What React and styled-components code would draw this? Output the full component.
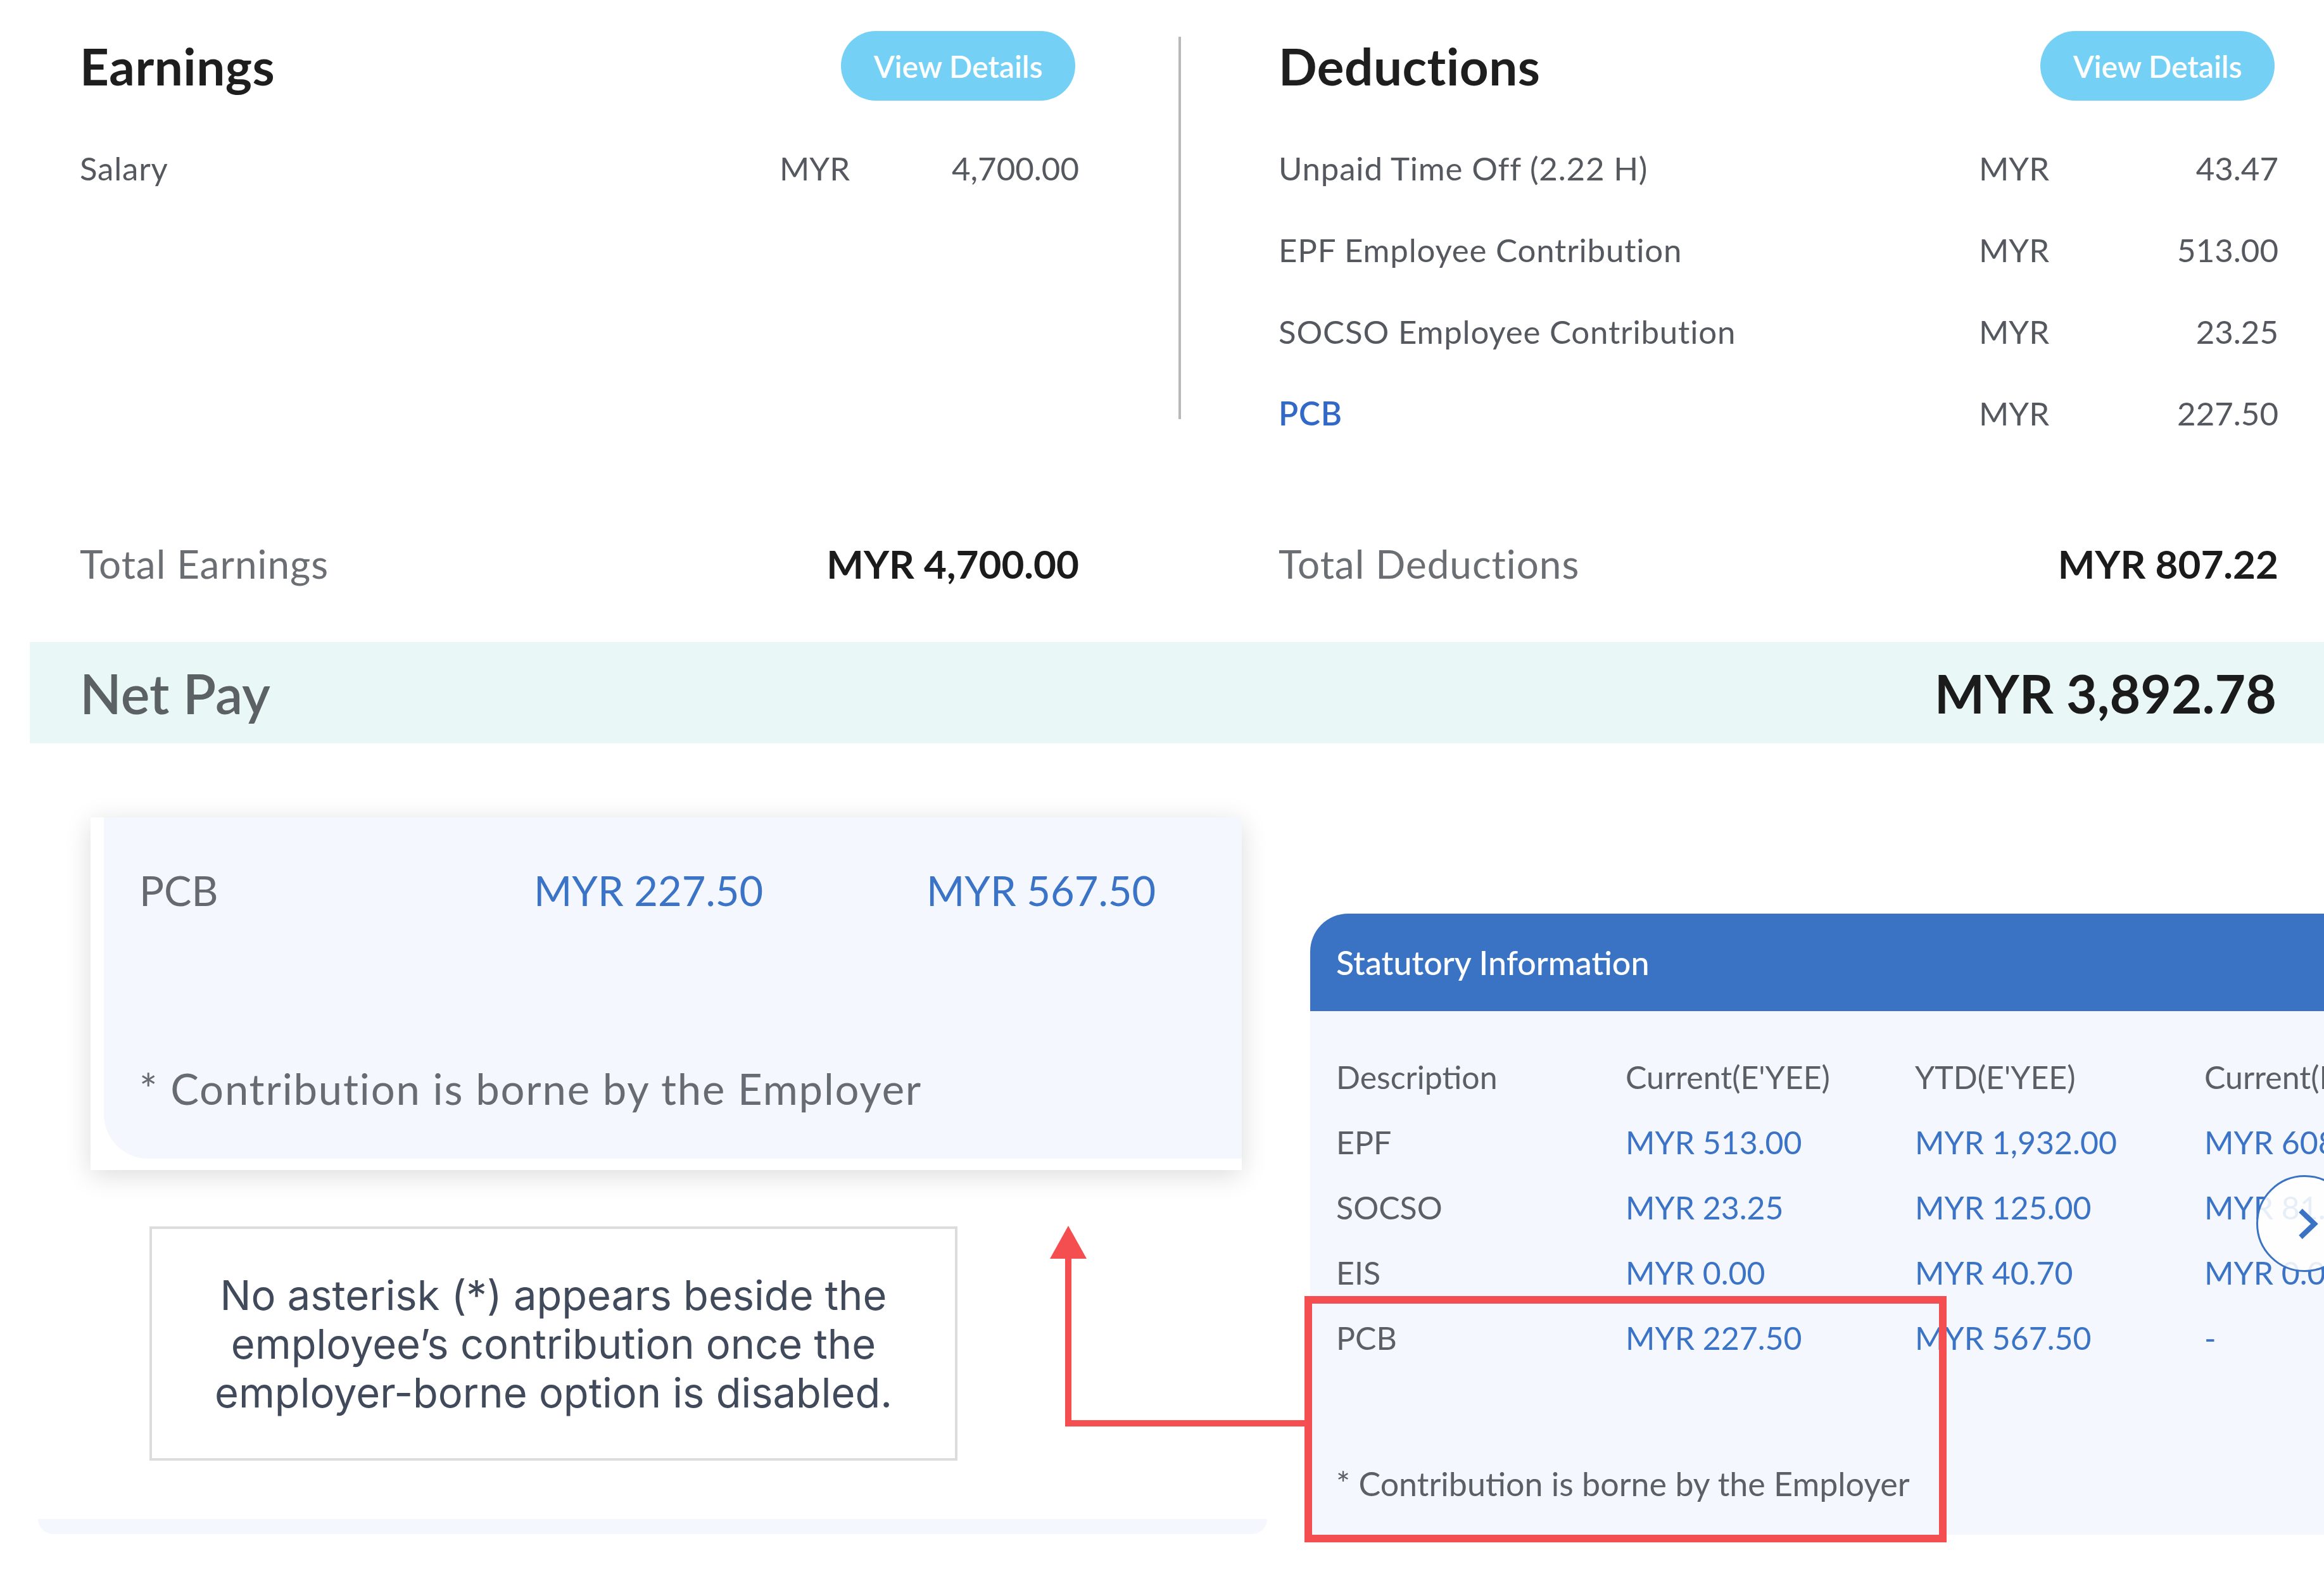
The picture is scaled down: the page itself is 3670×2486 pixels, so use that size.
import React from "react";
import styled, { createGlobalStyle } from "styled-components";

const GlobalStyle = createGlobalStyle`
  body {
    margin: 0;
    background: #ffffff;
    font-family: Lato, "Noto Sans", sans-serif;
  }
`;

const Page = styled.div`
  position: relative;
  width: 3670px;
  height: 2486px;
  overflow: hidden;
  background: #ffffff;
`;

const Summary = styled.div`
  display: flex;
  padding: 0 72px 0 126px;
`;

const Column = styled.div`
  display: flex;
  flex-direction: column;
  width: ${(p) => (p.$width ? `${p.$width}px` : "auto")};
  flex: ${(p) => (p.$width ? "0 0 auto" : "1")};
`;

const Header = styled.div`
  display: flex;
  align-items: center;
  justify-content: space-between;
  height: 110px;
  margin-top: 49px;
`;

const Title = styled.h2`
  margin: 0;
  font-size: 80px;
  font-weight: 700;
  letter-spacing: 0.5px;
  color: #1e1e1e;
`;

const DetailsButton = styled.button`
  width: 370px;
  height: 110px;
  margin-right: 6px;
  border: none;
  border-radius: 55px;
  background: #74d0f4;
  color: #ffffff;
  font-family: inherit;
  font-size: 48px;
  font-weight: 600;
`;

const ItemList = styled.div`
  display: flex;
  flex-direction: column;
  height: 516px;
  margin-top: 42px;
`;

const ItemRow = styled.div`
  display: grid;
  grid-template-columns: 1fr 473px;
  align-items: center;
  height: 129px;
  font-size: 51px;
  color: #55595f;
`;

const ItemLabel = styled.span`
  letter-spacing: 0.8px;
  color: ${(p) => (p.$link ? "#3369c6" : "#55595f")};
  font-weight: ${(p) => (p.$link ? 600 : 400)};
`;

const Amount = styled.div`
  display: flex;
  justify-content: space-between;
`;

const TotalRow = styled.div`
  display: flex;
  align-items: center;
  justify-content: space-between;
  height: 100px;
  margin-top: 123px;
`;

const TotalLabel = styled.span`
  font-size: 62px;
  letter-spacing: 1px;
  color: #6b6f74;
`;

const TotalValue = styled.span`
  font-size: 62px;
  font-weight: 700;
  color: #1b1b1b;
`;

const Divider = styled.div`
  flex: 0 0 4px;
  height: 604px;
  margin: 58px 154px 0 157px;
  background: #b8b8b8;
`;

const NetPayBar = styled.div`
  display: flex;
  align-items: center;
  justify-content: space-between;
  height: 160px;
  margin: 74px 0 0 47px;
  padding: 0 75px 0 79px;
  background: #e9f7f6;
`;

const NetLabel = styled.span`
  font-size: 86px;
  font-weight: 600;
  color: #5c6166;
`;

const NetValue = styled.span`
  font-size: 84px;
  font-weight: 700;
  color: #1b1b1b;
`;

const Lower = styled.div`
  display: flex;
  align-items: flex-start;
`;

const LeftCol = styled.div`
  display: flex;
  flex-direction: column;
  flex: 0 0 1941px;
  margin-left: 60px;
`;

const SnippetCard = styled.div`
  box-sizing: border-box;
  width: 1818px;
  margin: 117px 0 0 83px;
  padding: 0 0 18px 21px;
  background: #ffffff;
  box-shadow: 0 8px 40px rgba(0, 0, 0, 0.14);
`;

const SnippetInner = styled.div`
  display: flex;
  flex-direction: column;
  height: 539px;
  padding-left: 56px;
  background: #f4f7fd;
  border-bottom-left-radius: 70px;
`;

const SnippetRow = styled.div`
  display: grid;
  grid-template-columns: 623px 620px auto;
  align-items: center;
  height: 80px;
  margin-top: 75px;
  font-size: 65px;
`;

const Muted = styled.span`
  color: ${(p) => p.$color || "#666a70"};
`;

const Blue = styled.span`
  color: #3b73c6;
`;

const SnippetNote = styled.div`
  height: 80px;
  line-height: 80px;
  margin-top: 233px;
  font-size: 67px;
  letter-spacing: 1.8px;
  color: #676b72;
`;

const Annotation = styled.div`
  box-sizing: border-box;
  display: flex;
  align-items: center;
  justify-content: center;
  width: 1276px;
  height: 370px;
  margin: 89px 0 0 176px;
  border: 4px solid #dcdcdc;
  font-family: Inter, "Liberation Sans", sans-serif;
  font-size: 65px;
  line-height: 77px;
  text-align: center;
  color: #404a5a;
`;

const BottomStrip = styled.div`
  height: 24px;
  margin-top: 92px;
  background: #f4f7fd;
  border-radius: 0 0 40px 40px;
`;

const StatPanel = styled.div`
  position: relative;
  flex: 0 0 1700px;
  margin: 269px 0 0 68px;
`;

const StatHeader = styled.div`
  display: flex;
  align-items: center;
  height: 154px;
  padding-left: 41px;
  background: #3b73c4;
  border-top-left-radius: 60px;
  color: #ffffff;
  font-size: 52px;
  font-weight: 500;
`;

const StatBody = styled.div`
  box-sizing: border-box;
  height: 827px;
  padding: 52px 0 0 41px;
  background: #f4f7fd;
`;

const StatRow = styled.div`
  display: grid;
  grid-template-columns: repeat(4, 457px);
  align-items: center;
  height: 103px;
  font-size: 50px;
  white-space: nowrap;
`;

const StatNote = styled.div`
  height: 60px;
  line-height: 60px;
  margin-top: 149px;
  font-size: 52px;
  color: #5b6067;
`;

const NextButton = styled.div`
  position: absolute;
  left: 1494px;
  top: 413px;
  box-sizing: border-box;
  display: flex;
  align-items: center;
  justify-content: center;
  width: 153px;
  height: 153px;
  border: 3px solid #3a72c4;
  border-radius: 50%;
  background: rgba(255, 255, 255, 0.88);
`;

const HighlightBox = styled.div`
  position: absolute;
  left: 2060px;
  top: 2047px;
  box-sizing: border-box;
  width: 1014px;
  height: 389px;
  border: 12px solid #f44e50;
`;

const Arrow = styled.svg`
  position: absolute;
  left: 1640px;
  top: 1930px;
  width: 430px;
  height: 330px;
`;

const deductions = [
  { label: "Unpaid Time Off (2.22 H)", value: "43.47" },
  { label: "EPF Employee Contribution", value: "513.00" },
  { label: "SOCSO Employee Contribution", value: "23.25" },
  { label: "PCB", value: "227.50", link: true },
];

const statRows = [
  ["EPF", "MYR 513.00", "MYR 1,932.00", "MYR 608.00"],
  ["SOCSO", "MYR 23.25", "MYR 125.00", "MYR 81.30"],
  ["EIS", "MYR 0.00", "MYR 40.70", "MYR 0.00"],
  ["PCB", "MYR 227.50", "MYR 567.50", "-"],
];

const Item = ({ label, value, link }) => (
  <ItemRow>
    <ItemLabel $link={link}>{label}</ItemLabel>
    <Amount>
      <span>MYR</span>
      <span>{value}</span>
    </Amount>
  </ItemRow>
);

export default function App() {
  return (
    <Page>
      <GlobalStyle />
      <Summary>
        <Column $width={1578}>
          <Header>
            <Title>Earnings</Title>
            <DetailsButton>View Details</DetailsButton>
          </Header>
          <ItemList>
            <Item label="Salary" value="4,700.00" />
          </ItemList>
          <TotalRow>
            <TotalLabel>Total Earnings</TotalLabel>
            <TotalValue>MYR 4,700.00</TotalValue>
          </TotalRow>
        </Column>
        <Divider />
        <Column>
          <Header>
            <Title>Deductions</Title>
            <DetailsButton>View Details</DetailsButton>
          </Header>
          <ItemList>
            {deductions.map((d) => (
              <Item key={d.label} {...d} />
            ))}
          </ItemList>
          <TotalRow>
            <TotalLabel>Total Deductions</TotalLabel>
            <TotalValue>MYR 807.22</TotalValue>
          </TotalRow>
        </Column>
      </Summary>

      <NetPayBar>
        <NetLabel>Net Pay</NetLabel>
        <NetValue>MYR 3,892.78</NetValue>
      </NetPayBar>

      <Lower>
        <LeftCol>
          <SnippetCard>
            <SnippetInner>
              <SnippetRow>
                <Muted>PCB</Muted>
                <Blue>MYR 227.50</Blue>
                <Blue>MYR 567.50</Blue>
              </SnippetRow>
              <SnippetNote>* Contribution is borne by the Employer</SnippetNote>
            </SnippetInner>
          </SnippetCard>
          <Annotation>
            <div>
              No asterisk (*) appears beside the
              <br />
              employee’s contribution once the
              <br />
              employer-borne option is disabled.
            </div>
          </Annotation>
          <BottomStrip />
        </LeftCol>

        <StatPanel>
          <StatHeader>Statutory Information</StatHeader>
          <StatBody>
            <StatRow>
              <Muted $color="#5b6067">Description</Muted>
              <Muted $color="#5b6067">Current(E'YEE)</Muted>
              <Muted $color="#5b6067">YTD(E'YEE)</Muted>
              <Muted $color="#5b6067">Current(E'YER)</Muted>
            </StatRow>
            {statRows.map(([name, ...vals]) => (
              <StatRow key={name}>
                <Muted $color="#5b6067">{name}</Muted>
                {vals.map((v, i) => (
                  <Blue key={i}>{v}</Blue>
                ))}
              </StatRow>
            ))}
            <StatNote>* Contribution is borne by the Employer</StatNote>
          </StatBody>
          <NextButton>
            <svg width="40" height="52" viewBox="0 0 40 52" style={{ marginLeft: 10 }}>
              <path d="M8 5 L30 26 L8 47" fill="none" stroke="#3a72c4" strokeWidth="8" />
            </svg>
          </NextButton>
        </StatPanel>
      </Lower>

      <Arrow viewBox="1640 1930 430 330">
        <path d="M1687 1984 V2248 H2062" fill="none" stroke="#f44e50" strokeWidth="10" />
        <polygon points="1687,1936 1658,1988 1716,1988" fill="#f44e50" />
      </Arrow>
      <HighlightBox />
    </Page>
  );
}
